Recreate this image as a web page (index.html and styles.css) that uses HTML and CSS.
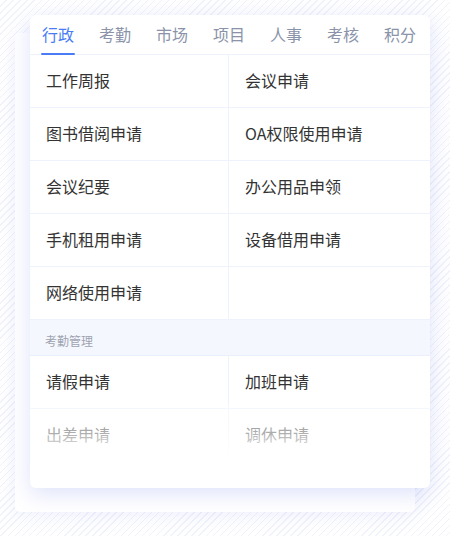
FILE: index.html
```html
<!DOCTYPE html>
<html lang="zh-CN">

<head>
  <meta charset="UTF-8">
  <meta name="viewport" content="width=device-width, initial-scale=1.0">
  <title>审批应用</title>
  <link rel="stylesheet" href="styles.css">
</head>

<body>

  <div class="stage">
    <!-- Front card -->
    <div class="card">

      <!-- Tabs -->
      <div class="tabs">
        <span class="tab active">行政</span>
        <span class="tab">考勤</span>
        <span class="tab">市场</span>
        <span class="tab">项目</span>
        <span class="tab">人事</span>
        <span class="tab">考核</span>
        <span class="tab">积分</span>
      </div>

      <!-- Apply list -->
      <div class="list">
        <div class="grid">
          <div class="cell">工作周报</div>
          <div class="cell">会议申请</div>
          <div class="cell">图书借阅申请</div>
          <div class="cell">OA权限使用申请</div>
          <div class="cell">会议纪要</div>
          <div class="cell">办公用品申领</div>
          <div class="cell">手机租用申请</div>
          <div class="cell">设备借用申请</div>
          <div class="cell">网络使用申请</div>
          <div class="cell"></div>
        </div>

        <div class="group-title">考勤管理</div>

        <div class="grid">
          <div class="cell">请假申请</div>
          <div class="cell">加班申请</div>
          <div class="cell">出差申请</div>
          <div class="cell">调休申请</div>
        </div>
        <div class="fade"></div>
      </div>

    </div>
  </div>

</body>

</html>
```

FILE: styles.css
```css
body {
  margin: 0;
  padding: 0;
  font-family: "Noto Sans CJK SC", "Noto Sans", sans-serif;
  background-color: #ffffff;
  background-image: repeating-linear-gradient(135deg, #ffffff 0, #ffffff 4px, #f1f3fb 4px, #f1f3fb 5px);
  height: 536px;
  overflow: hidden;
}

.stage {
  position: relative;
  padding: 15px 20px 0 30px;
}

/* back card */
.stage::before {
  content: "";
  position: absolute;
  left: 15px;
  top: 33px;
  width: 400px;
  height: 479px;
  background: #ffffff;
  border-radius: 5px;
  box-shadow: 0 4px 18px rgba(110, 125, 225, 0.10);
}

.card {
  position: relative;
  width: 400px;
  height: 473px;
  background: white;
  border-radius: 6px;
  box-shadow: 0 6px 22px rgba(90, 110, 230, 0.20);
  overflow: hidden;
}

.tabs {
  display: flex;
  gap: 25px;
  padding: 0 12px;
  height: 39px;
  border-bottom: 1px solid #edf2fd;
}

.tab {
  position: relative;
  font-size: 16px;
  line-height: 39px;
  color: #8a93a9;
  white-space: nowrap;
}

.tab.active {
  color: #4a7cf5;
}

.tab.active::after {
  content: "";
  position: absolute;
  left: -1px;
  right: -1px;
  bottom: -1px;
  height: 2px;
  background: #4a7cf5;
  border-radius: 1px;
}

.list {
  position: relative;
}

.grid {
  display: grid;
  grid-template-columns: 199px 201px;
}

.cell {
  height: 52px;
  line-height: 51px;
  padding-left: 16px;
  font-size: 16px;
  color: #333333;
  border-bottom: 1px solid #eef2fd;
}

.cell:nth-child(odd) {
  border-right: 1px solid #eef2fd;
}

.group-title {
  background: #f4f7fe;
  font-size: 12px;
  line-height: 16px;
  color: #9ea3b0;
  padding: 13px 0 6px 15px;
  border-bottom: 1px solid #e9effc;
}

.fade {
  position: absolute;
  left: 0;
  right: 0;
  bottom: 0;
  height: 58px;
  background: linear-gradient(to bottom, rgba(255, 255, 255, 0.35), rgba(255, 255, 255, 0.6) 50%, #ffffff 92%);
}
```
